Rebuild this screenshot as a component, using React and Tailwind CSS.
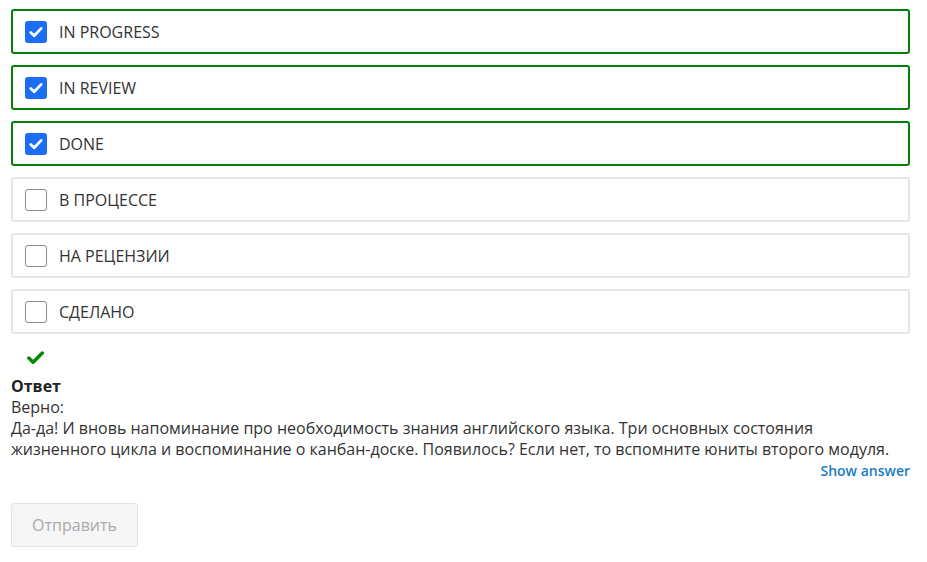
import React, { useState } from "react";

const options = [
  { id: 1, label: "IN PROGRESS", checked: true },
  { id: 2, label: "IN REVIEW", checked: true },
  { id: 3, label: "DONE", checked: true },
  { id: 4, label: "В ПРОЦЕССЕ", checked: false },
  { id: 5, label: "НА РЕЦЕНЗИИ", checked: false },
  { id: 6, label: "СДЕЛАНО", checked: false },
];

function CheckBox({ checked }) {
  if (checked) {
    return (
      <span className="flex h-[22px] w-[22px] items-center justify-center rounded-[3px] bg-[#1b6ef3]">
        <svg width="16" height="16" viewBox="0 0 16 16" fill="none">
          <path
            d="M2.8 8.4l3.4 3.3L13.2 4.4"
            stroke="white"
            strokeWidth="2.8"
            strokeLinecap="round"
            strokeLinejoin="round"
          />
        </svg>
      </span>
    );
  }
  return (
    <span className="block h-[22px] w-[22px] rounded-[3px] border border-[#8a8a8a] bg-white" />
  );
}

export default function App() {
  const [items] = useState(options);

  return (
    <div
      className="min-h-screen bg-white px-[11px] pt-[9px] text-[#333]"
      style={{ fontFamily: '"Open Sans", "Noto Sans", sans-serif' }}
    >
      <div className="flex flex-col gap-[11px] pr-[6px]">
        {items.map((item) => (
          <label
            key={item.id}
            className={`flex h-[45px] items-center gap-[12px] rounded-[3px] border-2 pl-[12px] ${
              item.checked ? "border-[#008000]" : "border-[#e6e6e6]"
            }`}
          >
            <CheckBox checked={item.checked} />
            <span className="text-[16px] text-[#333]">{item.label}</span>
          </label>
        ))}
      </div>

      <div className="mt-[17px] pl-[16px] leading-none">
        <svg width="17" height="13" viewBox="0 0 17 13">
          <path
            d="M1.8 7l4.3 4.3L15.3 2"
            stroke="#008a00"
            strokeWidth="3.4"
            fill="none"
            strokeLinecap="round"
            strokeLinejoin="round"
          />
        </svg>
      </div>

      <div className="mt-[12px] pr-[6px] text-[16px] leading-[21px]">
        <div className="font-bold text-[#222]">Ответ</div>
        <div>Верно:</div>
        <p>
          Да-да! И вновь напоминание про необходимость знания английского языка. Три основных состояния
          жизненного цикла и воспоминание о канбан-доске. Появилось? Если нет, то вспомните юниты второго модуля.
        </p>
        <div className="flex justify-end">
          <button className="text-[14px] font-semibold text-[#1a7bc4]">Show answer</button>
        </div>
      </div>

      <button
        disabled
        className="mt-[22px] h-[44px] w-[127px] rounded-[3px] border border-[#e3e3e3] bg-[#f6f6f6] text-[16px] text-[#aaa]"
      >
        Отправить
      </button>
    </div>
  );
}
